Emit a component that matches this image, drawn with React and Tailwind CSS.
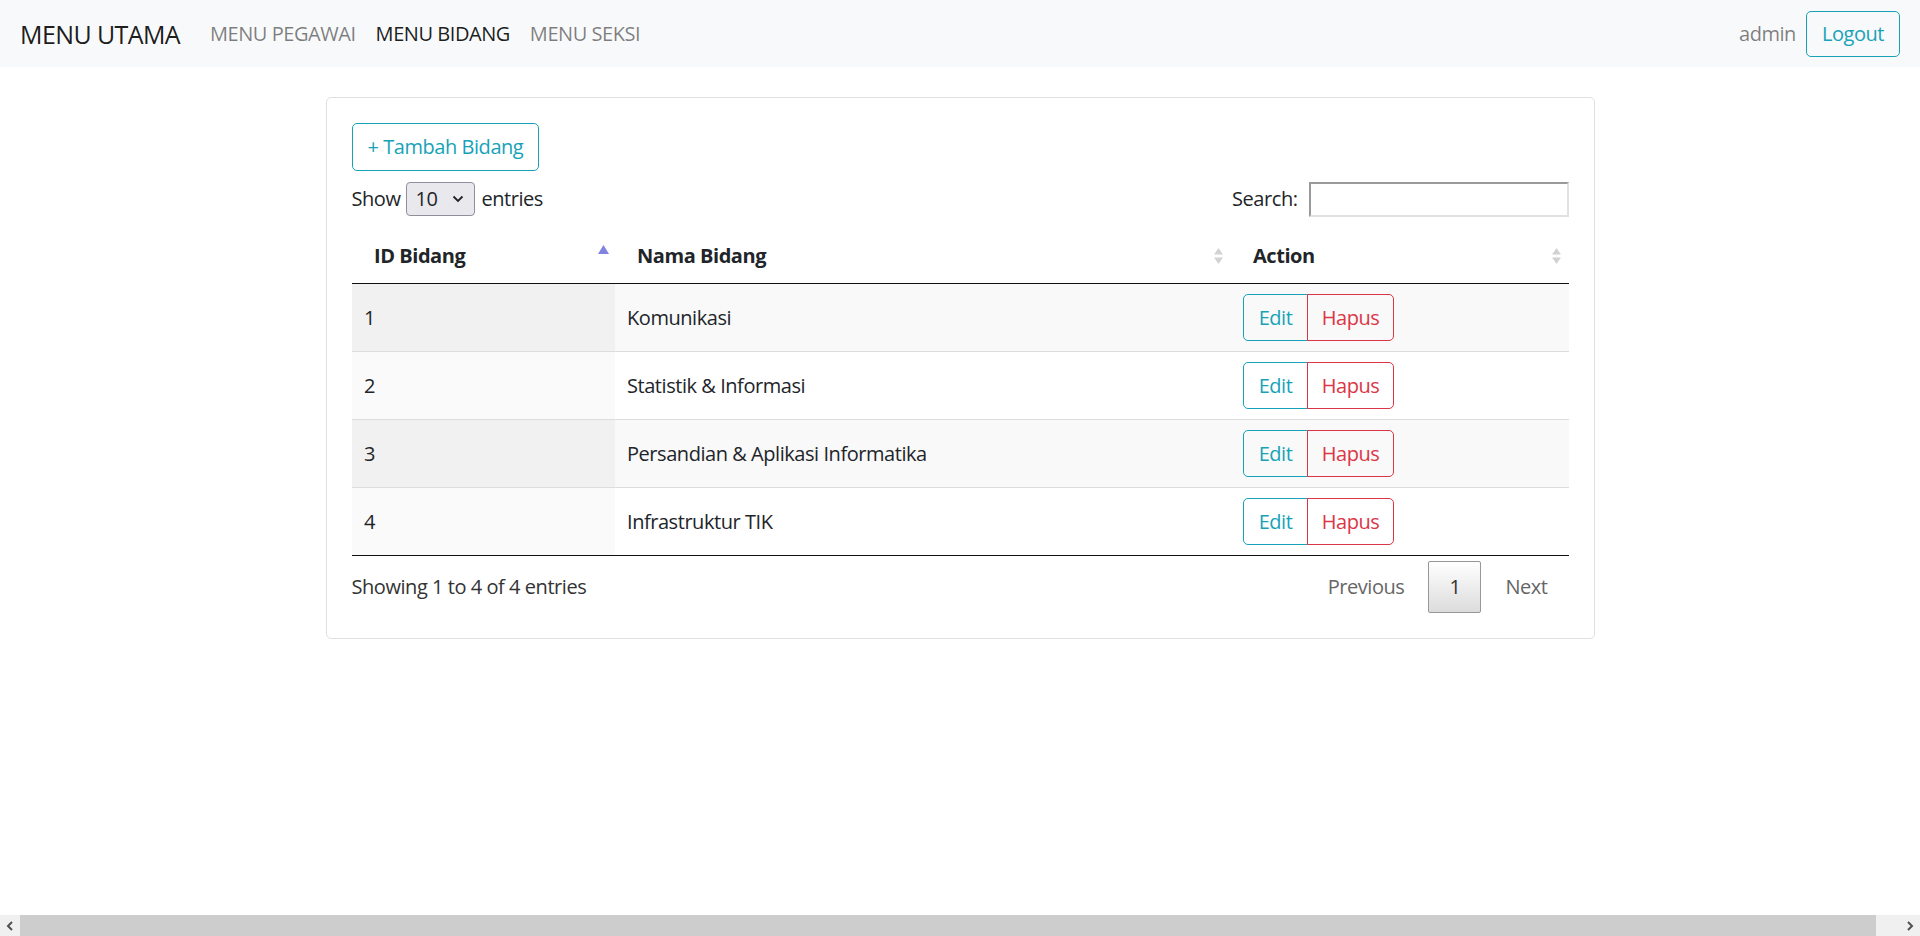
import React from 'react';

const rows = [
  { id: 1, nama: 'Komunikasi' },
  { id: 2, nama: 'Statistik & Informasi' },
  { id: 3, nama: 'Persandian & Aplikasi Informatika' },
  { id: 4, nama: 'Infrastruktur TIK' },
];

const SortAsc = () => (
  <svg width="11" height="20" viewBox="0 0 11 20" className="absolute right-[6px] top-[17px]">
    <path d="M5.5 0 L11 9 L0 9 Z" fill="#8282e0" />
  </svg>
);

const SortBoth = () => (
  <svg width="11" height="16" viewBox="0 0 11 16" className="absolute right-[7px] top-[20px]">
    <path d="M5.5 0 L10 6.5 L1 6.5 Z" fill="#d2d2d2" />
    <path d="M1 9.5 L10 9.5 L5.5 16 Z" fill="#d2d2d2" />
  </svg>
);

const App = () => {
  return (
    <div className="h-screen overflow-hidden bg-white font-['Open_Sans',sans-serif] text-[20px] leading-[30px] tracking-[-0.45px] text-[#212529]">
      {/* Navbar */}
      <nav className="h-[67px] bg-[#f8f9fa] flex items-center px-5">
        <span className="text-[25px] tracking-[-0.6px] text-black/90 mr-5">MENU UTAMA</span>
        <a className="px-[10px] text-black/50">MENU PEGAWAI</a>
        <a className="px-[10px] text-black/90">MENU BIDANG</a>
        <a className="px-[10px] text-black/50">MENU SEKSI</a>
        <div className="ml-auto flex items-center gap-[10px]">
          <span className="text-black/50">admin</span>
          <button className="h-[46px] px-[15px] border border-[#17a2b8] rounded-[5px] text-[#17a2b8]">
            Logout
          </button>
        </div>
      </nav>

      {/* Card */}
      <div className="w-[1269px] mx-auto mt-[30px] border border-black/[0.125] rounded-[5px] p-[25px]">
        <button className="h-[48px] px-[15px] border border-[#17a2b8] rounded-[5px] text-[#17a2b8]">
          + Tambah Bidang
        </button>

        <div className="mt-[10px] flex items-center justify-between h-[36px]">
          <div className="flex items-center gap-[6px]">
            <span>Show</span>
            <div className="w-[69px] h-[34px] bg-[#e9e9ed] border border-[#8f8f9d] rounded-[4px] flex items-center justify-between pl-[8px] pr-[10px]">
              <span className="text-[20px]">10</span>
              <svg width="12" height="8" viewBox="0 0 12 8">
                <path d="M1.5 1.5 L6 6 L10.5 1.5" fill="none" stroke="#222" strokeWidth="1.8" />
              </svg>
            </div>
            <span>entries</span>
          </div>
          <div className="flex items-center gap-[11px]">
            <span>Search:</span>
            <input
              type="text"
              className="w-[260px] h-[35px] border-2 border-t-[#9a9a9a] border-l-[#9a9a9a] border-b-[#e2e2e2] border-r-[#e2e2e2] outline-none"
            />
          </div>
        </div>

        {/* Table */}
        <table className="mt-[11px] w-full border-separate border-spacing-0 table-fixed">
          <colgroup>
            <col className="w-[263px]" />
            <col className="w-[616px]" />
            <col className="w-[338px]" />
          </colgroup>
          <thead>
            <tr>
              <th className="relative text-left font-bold pl-[22.5px] pr-[22.5px] py-[12.5px] border-b border-[#111]">
                ID Bidang
                <SortAsc />
              </th>
              <th className="relative text-left font-bold pl-[22.5px] pr-[22.5px] py-[12.5px] border-b border-[#111]">
                Nama Bidang
                <SortBoth />
              </th>
              <th className="relative text-left font-bold pl-[22.5px] pr-[22.5px] py-[12.5px] border-b border-[#111]">
                Action
                <SortBoth />
              </th>
            </tr>
          </thead>
          <tbody>
            {rows.map((row, i) => {
              const odd = i % 2 === 0;
              const border = i === 0 ? '' : 'border-t border-[#ddd]';
              return (
                <tr key={row.id} className={odd ? 'bg-[#f9f9f9]' : 'bg-white'}>
                  <td className={`h-[67px] px-[12.5px] py-[10px] ${border} ${odd ? 'bg-[#f1f1f1]' : 'bg-[#fafafa]'}`}>
                    {row.id}
                  </td>
                  <td className={`px-[12.5px] py-[10px] ${border}`}>{row.nama}</td>
                  <td className={`px-[12.5px] py-[10px] ${border}`}>
                    <div className="flex">
                      <button className="h-[47px] w-[65px] border border-[#17a2b8] rounded-l-[5px] text-[#17a2b8]">
                        Edit
                      </button>
                      <button className="h-[47px] w-[87px] -ml-px border border-[#dc3545] rounded-r-[5px] text-[#dc3545]">
                        Hapus
                      </button>
                    </div>
                  </td>
                </tr>
              );
            })}
            <tr>
              <td colSpan={3} className="border-t border-[#111] p-0 h-0" />
            </tr>
          </tbody>
        </table>

        {/* Footer */}
        <div className="mt-[5px] flex items-center justify-between">
          <div className="text-[#333]">Showing 1 to 4 of 4 entries</div>
          <div className="flex items-center gap-[3px]">
            <span className="px-[20px] py-[10px] border border-transparent text-[#666]">Previous</span>
            <span className="w-[53px] h-[52px] flex items-center justify-center border border-[#979797] rounded-[2px] bg-gradient-to-b from-white to-[#dcdcdc] text-[#333]">
              1
            </span>
            <span className="px-[20px] py-[10px] border border-transparent text-[#666]">Next</span>
          </div>
        </div>
      </div>

      {/* Horizontal scrollbar */}
      <div className="fixed bottom-0 left-0 right-0 h-[21px] flex bg-[#f0f0f0]">
        <div className="w-[20px] flex items-center justify-center">
          <svg width="8" height="10" viewBox="0 0 8 10">
            <path d="M6 1 L2 5 L6 9" fill="none" stroke="#505050" strokeWidth="2" />
          </svg>
        </div>
        <div className="flex-1 bg-[#cdcdcd]" />
        <div className="w-[24px]" />
        <div className="w-[20px] flex items-center justify-center">
          <svg width="8" height="10" viewBox="0 0 8 10">
            <path d="M2 1 L6 5 L2 9" fill="none" stroke="#505050" strokeWidth="2" />
          </svg>
        </div>
      </div>
    </div>
  );
};

export default App;
